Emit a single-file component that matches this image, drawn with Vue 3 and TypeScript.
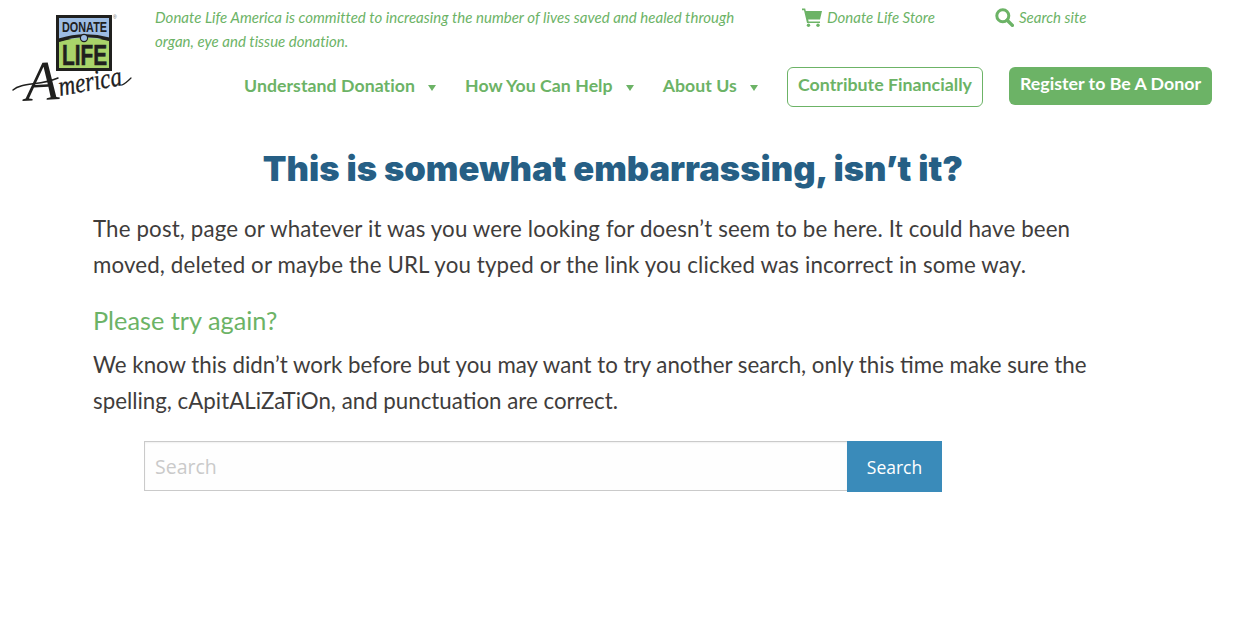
<script setup lang="ts">
const navItems: string[] = ['Understand Donation', 'How You Can Help', 'About Us']
</script>

<template>
  <div class="page">
    <header class="header">
      <a class="logo" aria-label="Donate Life America">
        <svg width="155" height="114" viewBox="0 0 155 114">
          <rect x="56" y="15" width="56" height="56" fill="#20201e" />
          <rect x="59" y="18" width="50" height="21" fill="#9dbce3" />
          <path d="M59 42 Q84 34 109 41 V68 H59 Z" fill="#a9d46a" />
          <path d="M59 40 Q84 32 109 39" fill="none" stroke="#20201e" stroke-width="3" />
          <text x="62" y="32" class="l-donate" textLength="45" lengthAdjust="spacingAndGlyphs">DONATE</text>
          <circle cx="84" cy="38" r="3.6" fill="#9dbce3" stroke="#20201e" stroke-width="1.2" />
          <text x="62" y="65" class="l-life" textLength="45" lengthAdjust="spacingAndGlyphs">LIFE</text>
          <text x="113" y="19" class="l-reg">®</text>
          <text x="25" y="100" class="l-a" transform="rotate(-3 40 90)">A</text>
          <path d="M13 90 C22 82 40 86 58 78" fill="none" stroke="#20201e" stroke-width="1.5" stroke-linecap="round" />
          <text x="60" y="96" class="l-merica" textLength="64" lengthAdjust="spacingAndGlyphs" transform="rotate(-10 60 96)">merica</text>
          <path d="M122 85 C125 84 128 81 131 78" fill="none" stroke="#20201e" stroke-width="1.2" stroke-linecap="round" />
        </svg>
      </a>
      <div class="head-right">
        <div class="top-row">
          <p class="tagline">Donate Life America is committed to increasing the number of lives saved and healed through organ, eye and tissue donation.</p>
          <a class="util store">
            <svg width="20" height="19" viewBox="0 0 20 19">
              <path d="M0 0.6h3.2l.6 2.4H20l-2 8.4H6.2l.4 2H18v1.7H5L2 2.3H0z" fill="#6cb366" />
              <circle cx="6.5" cy="17.2" r="1.7" fill="#6cb366" />
              <circle cx="16" cy="17.2" r="1.7" fill="#6cb366" />
            </svg>
            Donate Life Store
          </a>
          <a class="util search-link">
            <svg width="19" height="19" viewBox="0 0 19 19">
              <circle cx="7.8" cy="7.8" r="6" fill="none" stroke="#6cb366" stroke-width="3" />
              <path d="M12.2 12.2 17.4 17.4" stroke="#6cb366" stroke-width="3.4" stroke-linecap="round" />
            </svg>
            Search site
          </a>
        </div>
        <nav class="nav">
          <a v-for="item in navItems" :key="item" class="nav-item">
            {{ item }}<span class="caret"></span>
          </a>
          <a class="btn btn-outline">Contribute Financially</a>
          <a class="btn btn-solid">Register to Be A Donor</a>
        </nav>
      </div>
    </header>

    <main class="main">
      <h1 class="title">This is somewhat embarrassing, isn’t it?</h1>
      <p class="body lead">The post, page or whatever it was you were looking for doesn’t seem to be here. It could have been moved, deleted or maybe the URL you typed or the link you clicked was incorrect in some way.</p>
      <h2 class="sub">Please try again?</h2>
      <p class="body">We know this didn’t work before but you may want to try another search, only this time make sure the spelling, cApitALiZaTiOn, and punctuation are correct.</p>
      <form class="search-form" @submit.prevent>
        <input class="search-input" type="text" placeholder="Search" />
        <button class="search-btn" type="submit">Search</button>
      </form>
    </main>
  </div>
</template>

<style>
html, body { background: #fff; }
</style>

<style scoped>
.page {
  width: 1236px;
  height: 629px;
  overflow: hidden;
  font-family: Lato, "Open Sans", sans-serif;
  color: #3f3d3c;
}
.header {
  display: flex;
  height: 114px;
}
.logo {
  display: block;
  width: 155px;
  flex: none;
}
.logo svg { display: block; }
.l-donate { font: 700 15px "Liberation Sans", sans-serif; fill: #20201e; }
.l-life { font: 700 29px "Liberation Sans", sans-serif; fill: #20201e; stroke: #20201e; stroke-width: 0.6px; }
.l-reg { font: 5px "Liberation Sans", sans-serif; fill: #666; }
.l-a { font: italic 400 56px "Liberation Serif", serif; fill: #20201e; }
.l-merica { font: italic 400 28px "Liberation Serif", serif; fill: #20201e; stroke: #20201e; stroke-width: 0.3px; }
.head-right { flex: 1; }
.top-row {
  display: flex;
  align-items: flex-start;
  height: 61px;
}
.tagline {
  margin: 5px 47px 0 0;
  width: 600px;
  font-size: 15px;
  letter-spacing: 0.02px;
  font-style: italic;
  line-height: 24px;
  color: #6cb366;
  flex: none;
}
.util {
  display: flex;
  align-items: center;
  gap: 5px;
  margin-top: 7px;
  font-size: 15px;
  font-style: italic;
  color: #6cb366;
  line-height: 20px;
}
.store { width: 193px; flex: none; }
.nav {
  display: flex;
  align-items: center;
  padding: 0 24px 0 89px;
  margin-top: 6px;
}
.nav-item {
  display: flex;
  align-items: center;
  font-size: 17.7px;
  font-weight: 700;
  line-height: 20px;
  letter-spacing: 0.05px;
  margin-top: -2px;
  color: #6cb366;
  margin-right: 29px;
  white-space: nowrap;
}
.caret {
  width: 0;
  height: 0;
  margin-left: 13px;
  margin-top: 3px;
  border-left: 4px solid transparent;
  border-right: 4px solid transparent;
  border-top: 6px solid #6cb366;
}
.btn {
  display: flex;
  align-items: center;
  justify-content: center;
  box-sizing: border-box;
  font-size: 17.8px;
  font-weight: 700;
  line-height: 20px;
  padding-bottom: 7px;
  border-radius: 6px;
  white-space: nowrap;
}
.btn-outline {
  width: 196px;
  height: 40px;
  margin-left: auto;
  border: 1px solid #6cb366;
  color: #6cb366;
}
.btn-solid {
  width: 203px;
  height: 38px;
  margin-left: 26px;
  margin-top: -2px;
  background: #6cb366;
  color: #fff;
}
.main {
  width: 1040px;
  margin-left: 93px;
}
.title {
  margin: 32px 0 0;
  text-align: center;
  font-family: Inter, Lato, sans-serif;
  font-size: 34.6px;
  font-weight: 900;
  line-height: 44px;
  color: #265f85;
}
.body {
  margin: 21px 0 0;
  max-width: 1030px;
  font-size: 22.3px;
  line-height: 36px;
  color: #3f3d3c;
}
.lead { letter-spacing: 0.14px; }
.sub {
  margin: 22px 0 0;
  font-size: 25.3px;
  font-weight: 400;
  line-height: 30px;
  color: #6cb366;
}
.sub + .body { margin-top: 12px; }
.search-form {
  display: flex;
  margin: 22px 0 0 51px;
  width: 798px;
  height: 51px;
}
.search-input {
  flex: 1;
  min-width: 0;
  box-sizing: border-box;
  height: 50px;
  padding: 0 10px;
  border: 1px solid #cacaca;
  border-right: 0;
  outline: 0;
  background: #fefefe;
  font: 400 19.5px "Open Sans", sans-serif;
  color: #333;
  box-shadow: inset 0 1px 2px rgba(0, 0, 0, 0.06);
}
.search-input::placeholder { color: #cacaca; opacity: 1; }
.search-btn {
  width: 95px;
  border: 0;
  padding: 0;
  background: #3a8bba;
  color: #fff;
  font: 400 17.5px "Open Sans", sans-serif;
}
</style>
